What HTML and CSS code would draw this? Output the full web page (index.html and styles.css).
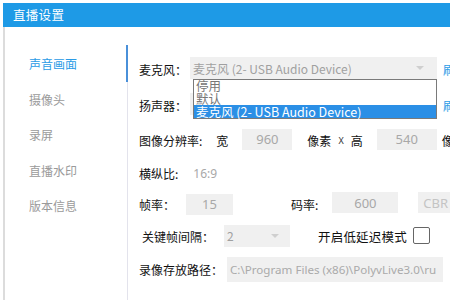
FILE: index.html
```html
<!DOCTYPE html>
<html lang="zh">
<head>
<meta charset="utf-8">
<link rel="stylesheet" href="styles.css">
</head>
<body>
<div class="window">
  <div class="titlebar">直播设置</div>
  <div class="main">
    <nav class="sidebar">
      <div class="nav-item active">声音画面</div>
      <div class="nav-item">摄像头</div>
      <div class="nav-item">录屏</div>
      <div class="nav-item">直播水印</div>
      <div class="nav-item">版本信息</div>
    </nav>
    <div class="divider"><div class="divider-active"></div></div>
    <div class="content">
      <div class="row">
        <span class="label">麦克风：</span>
        <div class="select mic-select">
          <span class="select-text">麦克风 (2- USB Audio Device)</span>
          <span class="arrow"></span>
          <ul class="dropdown">
            <li class="opt">停用</li>
            <li class="opt">默认</li>
            <li class="opt selected">麦克风 (2- USB Audio Device)</li>
          </ul>
        </div>
        <span class="link">刷新</span>
      </div>
      <div class="row">
        <span class="label">扬声器：</span>
        <div class="select mic-select"></div>
        <span class="link">刷新</span>
      </div>
      <div class="row">
        <span class="label">图像分辨率:</span>
        <span class="word w-kuan">宽</span>
        <span class="input in-w">960</span>
        <span class="word w-px">像素</span>
        <span class="x">X</span>
        <span class="word w-gao">高</span>
        <span class="input in-h">540</span>
        <span class="word w-px2">像素</span>
      </div>
      <div class="row">
        <span class="label">横纵比:</span>
        <span class="ratio">16:9</span>
      </div>
      <div class="row">
        <span class="label">帧率：</span>
        <span class="input in-fps">15</span>
        <span class="word w-rate">码率:</span>
        <span class="input in-rate">600</span>
        <span class="input in-cbr">CBR</span>
      </div>
      <div class="row">
        <span class="label label-key">关键帧间隔：</span>
        <div class="select key-select">
          <span class="select-text">2</span>
          <span class="arrow"></span>
        </div>
        <span class="lowlat">开启低延迟模式</span>
        <span class="checkbox"></span>
      </div>
      <div class="row">
        <span class="label">录像存放路径：</span>
        <span class="input in-path">C:\Program Files (x86)\PolyvLive3.0\ru</span>
      </div>
    </div>
  </div>
</div>
</body>
</html>
```

FILE: styles.css
```css
* { box-sizing: border-box; }
html, body {
  margin: 0;
  padding: 0;
  background: #ffffff;
  overflow: hidden;
}
body {
  width: 450px;
  height: 300px;
  font-family: "Noto Sans CJK SC", "Noto Sans", sans-serif;
  font-size: 12px;
  color: #222;
}
.window {
  margin: 3px 0 0 3px;
  width: 447px;
  height: 297px;
  overflow: hidden;
  display: flex;
  flex-direction: column;
}
.titlebar {
  height: 24px;
  flex: none;
  background: #1e9ae6;
  color: #fff;
  font-size: 12.5px;
  line-height: 24px;
  padding-left: 10px;
  letter-spacing: 0.3px;
}
.main {
  flex: 1;
  display: flex;
  border-left: 2px solid #dcdcdc;
}
.sidebar {
  width: 121px;
  flex: none;
  padding-top: 19px;
}
.nav-item {
  height: 35.5px;
  line-height: 35.5px;
  padding-left: 24px;
  color: #9a9a9a;
  font-size: 12px;
}
.nav-item.active { color: #2a9be6; }
.divider {
  width: 2px;
  flex: none;
  display: flex;
  flex-direction: column;
  align-items: flex-end;
  padding-top: 18px;
}
.divider::after {
  content: "";
  flex: 1;
  width: 1px;
  background: #e3e3ec;
}
.divider-active {
  width: 2px;
  height: 37px;
  background: #4a90d9;
}
.content {
  flex: 1;
  padding-top: 25px;
  padding-left: 11px;
  display: grid;
  grid-template-rows: 35px 36px 35px 30px 32px 33px 32px;
  align-content: start;
}
.row {
  display: flex;
  align-items: center;
  white-space: nowrap;
  position: relative;
}
.label {
  color: #111;
  flex: none;
}
.label-key { margin-left: 3px; }
.select {
  position: relative;
  height: 22px;
  background: #f0f0f0;
  display: flex;
  align-items: center;
  flex: none;
}
.mic-select {
  margin-left: 3px;
  width: 247px;
  margin-top: -3px;
}
.select-text {
  color: #a0a0a0;
  padding-left: 3px;
  font-size: 12px;
}
.arrow {
  position: absolute;
  right: 13px;
  top: 9px;
  width: 0;
  height: 0;
  border-left: 4px solid transparent;
  border-right: 4px solid transparent;
  border-top: 4px solid #cfcfcf;
}
.dropdown {
  position: absolute;
  left: 3px;
  top: 22px;
  width: 244px;
  margin: 0;
  padding: 0;
  list-style: none;
  background: #fff;
  border: 1px solid #7a7a7a;
  z-index: 5;
}
.opt {
  height: 12.5px;
  line-height: 12px;
  font-size: 12.5px;
  color: #777;
  padding-left: 2px;
}
.opt.selected {
  background: #2b8fe6;
  color: #fff;
  height: 13px;
  line-height: 13px;
}
.link {
  margin-left: 6px;
  color: #2a9be6;
  flex: none;
}
.word { color: #111; flex: none; }
.w-kuan { margin-left: 14px; }
.input {
  height: 21px;
  background: #f0f0f0;
  color: #a8a8a8;
  font-family: "Noto Sans", sans-serif;
  font-size: 13px;
  display: flex;
  align-items: center;
  justify-content: center;
  flex: none;
}
.in-w { width: 50px; margin-left: 14px; margin-top: -3px; }
.w-px { margin-left: 15px; }
.x {
  margin-left: 7px;
  font-family: "Noto Sans", sans-serif;
  font-size: 9px;
  color: #333;
}
.w-gao { margin-left: 7px; }
.in-h { width: 60px; margin-left: 14px; margin-top: -3px; }
.w-px2 { margin-left: 5px; }
.ratio {
  margin-left: 15px;
  color: #a8a8a8;
  font-family: "Noto Sans", sans-serif;
  font-size: 12px;
}
.in-fps { width: 47px; margin-left: 11px; }
.w-rate { margin-left: 58px; }
.in-rate { width: 66px; margin-left: 14px; margin-top: -3px; }
.in-cbr { width: 50px; margin-left: 20px; margin-top: -3px; justify-content: flex-start; padding-left: 5px; color: #c4c4c4; }
.key-select {
  width: 66px;
  margin-left: 10px;
  margin-top: -2px;
}
.key-select .arrow { right: 11px; }
.lowlat {
  margin-left: 28px;
  font-size: 12.5px;
  color: #111;
  letter-spacing: 0.2px;
}
.checkbox {
  width: 17px;
  height: 17px;
  border: 1px solid #666;
  border-radius: 2px;
  margin-left: 6px;
  margin-top: -2px;
  flex: none;
}
.in-path {
  width: 216px;
  height: 25px;
  margin-left: 4px;
  justify-content: flex-start;
  padding-left: 3px;
  overflow: hidden;
  font-size: 11.6px;
  color: #aaa;
}
```
